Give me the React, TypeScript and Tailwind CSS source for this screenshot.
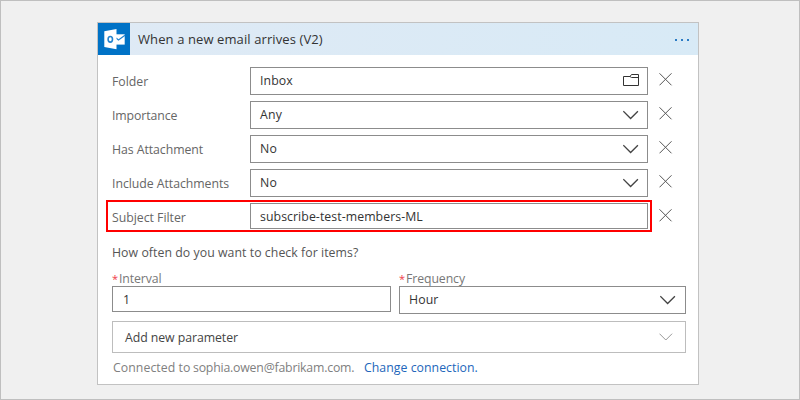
function Close() {
  return (
    <svg className="ml-[11px] mt-[6px] h-[14px] w-[14px]" viewBox="0 0 14 14" fill="none" stroke="#555" strokeWidth="1">
      <path d="M.5 .3 12.5 12.3M12.5 .3 .5 12.3" />
    </svg>
  );
}

function Chevron() {
  return (
    <svg className="h-[10px] w-4 shrink-0" viewBox="0 0 16 10" fill="none" stroke="#444" strokeWidth="1.3">
      <path d="M.3 1.2 7.6 8.5 14.9 1.2" />
    </svg>
  );
}

function Folder() {
  return (
    <svg className="mb-[2px] h-3 w-4 shrink-0" viewBox="0 0 16 12" fill="none" stroke="#333" strokeWidth="1">
      <path d="M.5 2.5H7L8.5 .5H15.5V11.5H.5ZM7 2.5 8.5 3.5H15.5" />
    </svg>
  );
}

const rows = [
  { label: "Folder", value: "Inbox", icon: "folder", ls: "tracking-[-0.03px]", vs: "tracking-[0.08px]" },
  { label: "Importance", value: "Any", icon: "chevron", ls: "tracking-[-0.1px]", vs: "tracking-[0.25px]" },
  { label: "Has Attachment", value: "No", icon: "chevron", ls: "tracking-[-0.06px]", vs: "tracking-[0.2px]" },
  { label: "Include Attachments", value: "No", icon: "chevron", ls: "tracking-[-0.05px]", vs: "tracking-[0.2px]" },
  { label: "Subject Filter", value: "subscribe-test-members-ML", icon: "", ls: "tracking-[-0.02px]", vs: "pt-px tracking-[0.07px]" },
];

export default function App() {
  return (
    <div className="h-[400px] w-[800px] overflow-hidden border border-[#bfbfbf] bg-[#f0f0f0] pl-24 pt-[21px] font-['Open_Sans','Noto_Sans',sans-serif] text-[12.3px] leading-4 text-[#333]">
      <div className="h-[363px] w-[602px] border border-[#c2c2c2] bg-white">
        <header className="flex h-8 items-center bg-gradient-to-r from-[#dfeaf5] to-[#d8eaf6]">
          <svg className="h-8 w-8 shrink-0" viewBox="0 0 32 32">
            <rect width="32" height="32" fill="#0072c6" />
            <path d="M17 11.3H26.7V21.6H17Z" fill="#fff" />
            <path d="M18 15 20.5 17 27 12.3" fill="none" stroke="#2484cf" strokeWidth="1.3" />
            <path d="M6.3 8.3 18.5 6V26.3L6.3 24Z" fill="#fff" />
            <ellipse cx="12.3" cy="16.3" rx="2.2" ry="2.8" fill="none" stroke="#2484cf" strokeWidth="1.6" />
          </svg>
          <h1 className="-mt-px ml-2 whitespace-nowrap text-[13px] tracking-[0.1px] text-[#333]">When a new email arrives (V2)</h1>
          <div className="ml-auto mr-[9px] mt-[2px] flex gap-1">
            <i className="h-[2px] w-[2px] bg-[#2b7bc4]" />
            <i className="h-[2px] w-[2px] bg-[#2b7bc4]" />
            <i className="h-[2px] w-[2px] bg-[#2b7bc4]" />
          </div>
        </header>
        <div className="pl-[14px] pt-3">
          <div className="flex flex-col gap-[6px]">
            {rows.map((r) => (
              <div key={r.label} className="relative flex h-7 items-start">
                <span className={`mt-[7px] w-[138px] whitespace-nowrap text-[#666] ${r.ls}`}>{r.label}</span>
                <div className={`flex w-[398px] items-center justify-between border border-[#8c8c8c] bg-white pl-[9px] pr-2 ${r.icon ? "h-7" : "h-[26px]"}`}>
                  <span className={`whitespace-nowrap ${r.vs}`}>{r.value}</span>
                  {r.icon === "folder" && <Folder />}
                  {r.icon === "chevron" && <Chevron />}
                </div>
                <Close />
                {!r.icon && <div className="absolute -left-[6px] -top-[3px] h-8 w-[546px] border-2 border-[#f00]" />}
              </div>
            ))}
          </div>
          <p className="mt-[14px] whitespace-nowrap tracking-[0.05px] text-[#555]">How often do you want to check for items?</p>
          <div className="mt-[9px] flex items-start gap-2">
            <div className="w-[279px]">
              <div className="flex h-4 gap-[2px] pt-px text-[#777]">
                <b className="w-[5px] text-[11px] font-normal text-[#f03a48]">*</b>
                <span className="tracking-[-0.1px]">Interval</span>
              </div>
              <div className="flex h-[26px] items-center border border-[#8c8c8c] pl-[10px] pt-px">1</div>
            </div>
            <div className="w-[287px]">
              <div className="flex h-4 gap-[2px] pt-px text-[#777]">
                <b className="w-[5px] text-[11px] font-normal text-[#f03a48]">*</b>
                <span className="tracking-[-0.1px]">Frequency</span>
              </div>
              <div className="flex h-7 items-center justify-between border border-[#8c8c8c] pl-[9px] pr-[9px]">
                <span className="tracking-[0.1px]">Hour</span>
                <Chevron />
              </div>
            </div>
          </div>
          <div className="mt-[7px] flex h-8 w-[574px] items-center justify-between border border-[#bdbdbd] pl-3 pr-3">
            <span className="pt-[2px] tracking-[-0.06px] text-[#444]">Add new parameter</span>
            <svg className="h-2 w-[14px]" viewBox="0 0 14 8" fill="none" stroke="#999">
              <path d="M.5 .7 6.8 7 13.1 .7" />
            </svg>
          </div>
          <div className="mt-[7px] flex whitespace-nowrap pl-px text-[#808080]">
            <span className="w-[80px] tracking-[0.05px]">Connected to </span>
            <span className="w-[171px] tracking-[-0.2px]">sophia.owen@fabrikam.com.</span>
            <a className="tracking-[0.03px] text-[#2266bb]">Change connection.</a>
          </div>
        </div>
      </div>
    </div>
  );
}
